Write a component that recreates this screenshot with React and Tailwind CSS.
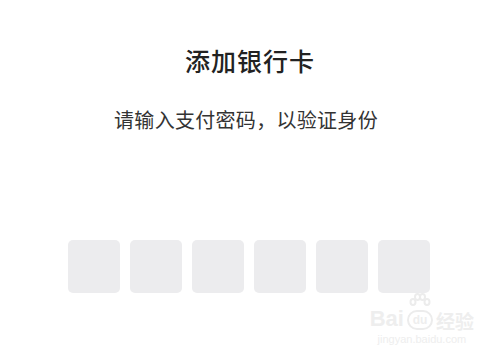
export default function App() {
  return (
    <div
      className="relative w-[500px] h-[356px] bg-white overflow-hidden flex flex-col items-center"
      style={{ fontFamily: '"Noto Sans CJK SC", "Noto Sans", sans-serif' }}
    >
      <div className="mt-[42px] text-[25px] leading-[36px] font-medium text-[#222] tracking-[1px]">
        添加银行卡
      </div>
      <div className="mt-[28px] pr-[8px] text-[20px] leading-[28px] text-[#333] tracking-[0.3px]">
        请输入支付密码，以验证身份
      </div>
      <div className="mt-[106px] flex gap-[10px] pr-[2px]">
        {[0, 1, 2, 3, 4, 5].map((i) => (
          <div key={i} className="w-[52px] h-[53px] rounded-[5px] bg-[#ececee]" />
        ))}
      </div>
      <div className="absolute right-[26px] bottom-[10px] flex flex-col items-center text-[#eeeeee]">
        <div className="flex items-end gap-[3px] leading-none">
          <span className="text-[22px] font-bold" style={{ fontFamily: '"Liberation Sans", sans-serif' }}>Bai</span>
          <div className="flex flex-col items-center">
            <svg width="22" height="16" viewBox="0 0 22 16" className="mb-[1px]">
              <g fill="none" stroke="#ececec" strokeWidth="2">
                <ellipse cx="4" cy="9" rx="2.5" ry="3" />
                <ellipse cx="8.5" cy="4" rx="2.5" ry="3" />
                <ellipse cx="13.5" cy="4" rx="2.5" ry="3" />
                <ellipse cx="18" cy="9" rx="2.5" ry="3" />
              </g>
            </svg>
            <span className="w-[26px] h-[20px] rounded-[10px] border-2 border-[#ececec] text-[12px] font-bold flex items-center justify-center" style={{ fontFamily: '"Liberation Sans", sans-serif' }}>du</span>
          </div>
          <span className="text-[19px] font-bold">经验</span>
        </div>
        <div className="text-[11px] leading-[14px] mt-[2px]" style={{ fontFamily: '"Liberation Sans", sans-serif' }}>
          jingyan.baidu.com
        </div>
      </div>
    </div>
  );
}
